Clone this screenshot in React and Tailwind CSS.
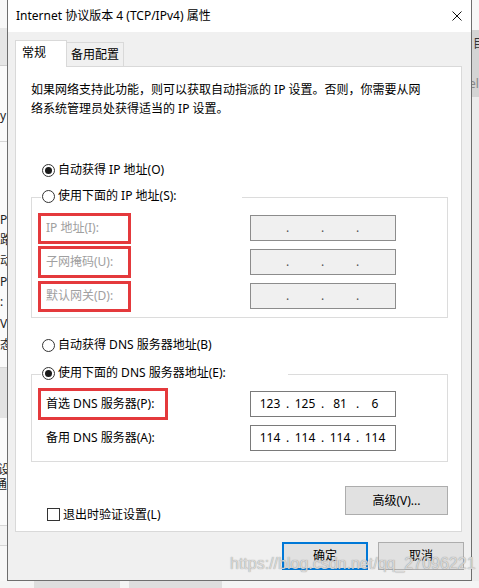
import React from "react";

const RED = "border-[#e4393c]";

function Radio({ checked, label, bgWidth }) {
  return (
    <div className="relative z-10 flex h-[20px] items-center ml-[25px]">
      <div
        className="flex h-[20px] items-center bg-white pl-[1px]"
        style={bgWidth ? { width: bgWidth } : undefined}
      >
        <span className="flex h-[13px] w-[13px] items-center justify-center rounded-full border border-[#333333] bg-white">
          {checked && <span className="h-[7px] w-[7px] rounded-full bg-[#1a1a1a]" />}
        </span>
        <span className="ml-[3px] whitespace-nowrap text-[12px] leading-[20px] text-black">{label}</span>
      </div>
    </div>
  );
}

function IpField({ values, disabled }) {
  const cls = disabled
    ? "border-[#8c8c8c] bg-[#f0f0f0]"
    : "border-[#7a7a7a] bg-white";
  const v = values || ["", "", "", ""];
  return (
    <div
      className={`grid h-[26px] w-[146px] grid-cols-[28px_7px_28px_7px_28px_7px_28px] items-center border pl-[5px] text-[12px] leading-[24px] text-black ${cls}`}
    >
      <span className="text-center">{v[0]}</span>
      <span className={`text-center ${disabled ? "text-[#555]" : ""}`}>.</span>
      <span className="text-center">{v[1]}</span>
      <span className={`text-center ${disabled ? "text-[#555]" : ""}`}>.</span>
      <span className="text-center">{v[2]}</span>
      <span className={`text-center ${disabled ? "text-[#555]" : ""}`}>.</span>
      <span className="text-center">{v[3]}</span>
    </div>
  );
}

function IpRow({ label, boxW, boxH, disabled, values, boxed }) {
  return (
    <div className="flex h-[26px] items-center">
      <div className="flex w-[218px] items-center">
        {boxed ? (
          <div
            className={`ml-[6px] flex items-center border-[3px] ${RED} pl-[5px]`}
            style={{ width: boxW, height: boxH }}
          >
            <span
              className={`whitespace-nowrap text-[12px] leading-[20px] ${
                disabled ? "text-[#a0a0a0]" : "text-black"
              }`}
            >
              {label}
            </span>
          </div>
        ) : (
          <span className="ml-[14px] whitespace-nowrap text-[12px] leading-[20px] text-black">{label}</span>
        )}
      </div>
      <IpField values={values} disabled={disabled} />
    </div>
  );
}

function LeftStrip() {
  const chars = [
    ["y", 108],
    ["P", 212],
    ["路", 232],
    ["动", 253],
    ["P", 274],
    [":", 294],
    ["VC", 316],
    ["态", 337],
  ];
  return (
    <div className="relative h-[581px] w-[7px] overflow-hidden bg-[#f7f7f7]">
      <div className="mt-[28px] h-[38px] border-b border-[#cfcfcf] bg-[#e6e6e6]" />
      <div className="h-[76px] border-b border-[#d6d6d6] bg-[#fafafa]" />
      <div className="h-[226px] border-b border-[#d6d6d6] bg-[#fafafa]" />
      <div className="h-[50px] bg-[#e3e3e3]" />
      <div className="h-[108px] border-b border-[#d6d6d6] bg-[#fafafa]" />
      <div className="h-[20px] border-b border-[#d6d6d6] bg-[#f3f3f3]" />
      {chars.map(([c, y]) => (
        <span
          key={y}
          className="absolute left-0 whitespace-nowrap text-[12px] leading-[16px] text-[#222]"
          style={{ top: y }}
        >
          {c}
        </span>
      ))}
      <span className="absolute left-[-2px] top-[462px] whitespace-nowrap text-[12px] leading-[16px] text-[#222]">设</span>
      <span className="absolute left-[-5px] top-[477px] whitespace-nowrap text-[12px] leading-[16px] text-[#222]">通</span>
    </div>
  );
}

function RightStrip() {
  return (
    <div className="relative h-[581px] w-[7px] overflow-hidden bg-[#f0f0f0]">
      <div className="h-[30px] bg-[#f7f7f7]" />
      <div className="h-[67px] bg-[#d4d4d4]" />
      <div className="h-[484px] bg-[#ececec]" />
      <span className="absolute left-[1px] top-[36px] text-[12px] leading-[16px] text-[#333]">目</span>
      <span className="absolute left-[-3px] top-[76px] text-[12px] leading-[16px] text-[#888]">el</span>
    </div>
  );
}

function Dialog() {
  return (
    <div className="flex h-[581px] w-[465px] flex-col border-x border-b border-[#6e6e6e] bg-[#f0f0f0]">
      {/* title bar */}
      <div className="flex h-[32px] items-center justify-between bg-white pl-[8px] pr-[9px]">
        <span className="whitespace-nowrap text-[12px] leading-[16px] text-black">
          Internet 协议版本 4 (TCP/IPv4) 属性
        </span>
        <svg width="10" height="10" viewBox="0 0 10 10" className="block">
          <path d="M0.5 0.5 L9.5 9.5 M9.5 0.5 L0.5 9.5" stroke="#111" strokeWidth="1" fill="none" />
        </svg>
      </div>

      {/* tabs */}
      <div className="mt-[8px] flex h-[26px] items-end pl-[7px]">
        <div className="relative z-10 -mb-px flex h-[27px] w-[52px] items-start border-x border-t border-[#d9d9d9] bg-white pl-[6px] pt-[3px]">
          <span className="text-[12px] leading-[18px] text-black">常规</span>
        </div>
        <div className="flex h-[24px] w-[57px] items-start border-r border-t border-[#d9d9d9] bg-[#f0f0f0] pl-[4px] pt-[3px]">
          <span className="whitespace-nowrap text-[12px] leading-[18px] text-black">备用配置</span>
        </div>
      </div>

      {/* panel */}
      <div className="ml-[7px] flex h-[466px] w-[447px] flex-col border border-[#d9d9d9] bg-white">
        <p className="ml-[15px] mt-[13px] whitespace-nowrap text-[12px] leading-[19px] text-black">
          如果网络支持此功能，则可以获取自动指派的 IP 设置。否则，你需要从网
          <br />
          络系统管理员处获得适当的 IP 设置。
        </p>

        <div className="mt-[42px]">
          <Radio checked label="自动获得 IP 地址(O)" />
        </div>
        <div className="mt-[6px]">
          <Radio label="使用下面的 IP 地址(S):" bgWidth={201} />
        </div>
        <div className="-mt-[9px] ml-[15px] flex w-[417px] flex-col gap-[8px] border border-[#dcdcdc] pb-[8px] pt-[17px]">
          <IpRow boxed disabled label="IP 地址(I):" boxW={93} boxH={31} />
          <IpRow boxed disabled label="子网掩码(U):" boxW={93} boxH={32} />
          <IpRow boxed disabled label="默认网关(D):" boxW={93} boxH={31} />
        </div>

        <div className="mt-[17px]">
          <Radio label="自动获得 DNS 服务器地址(B)" />
        </div>
        <div className="mt-[8px]">
          <Radio checked label="使用下面的 DNS 服务器地址(E):" bgWidth={247} />
        </div>
        <div className="-mt-[9px] ml-[15px] flex w-[417px] flex-col gap-[8px] border border-[#dcdcdc] pb-[10px] pt-[16px]">
          <IpRow boxed label="首选 DNS 服务器(P):" boxW={130} boxH={32} values={["123", "125", "81", "6"]} />
          <IpRow label="备用 DNS 服务器(A):" values={["114", "114", "114", "114"]} />
        </div>

        <div className="ml-[15px] flex w-[417px] items-start justify-between">
          <div className="mt-[46px] flex h-[13px] items-center pl-[16px]">
            <span className="h-[13px] w-[13px] border border-[#333333] bg-white" />
            <span className="ml-[3px] whitespace-nowrap text-[12px] leading-[16px] text-black">退出时验证设置(L)</span>
          </div>
          <button className="mt-[24px] flex h-[29px] w-[103px] items-center justify-center border border-[#adadad] bg-[#e1e1e1] text-[12px] leading-[16px] text-black">
            高级(V)...
          </button>
        </div>
      </div>

      {/* bottom buttons */}
      <div className="mt-[10px] flex justify-end gap-[10px] pr-[7px]">
        <button className="flex h-[28px] w-[86px] items-center justify-center border-2 border-[#0078d7] bg-[#e1e1e1] text-[12px] leading-[16px] text-black">
          确定
        </button>
        <button className="flex h-[28px] w-[86px] items-center justify-center border border-[#adadad] bg-[#e1e1e1] text-[12px] leading-[16px] text-black">
          取消
        </button>
      </div>
    </div>
  );
}

export default function App() {
  return (
    <div className="relative flex h-[588px] w-[479px] flex-col overflow-hidden bg-[#f0f0f0] font-['Noto_Sans','Noto_Sans_CJK_SC',sans-serif]">
      <div className="flex h-[581px]">
        <LeftStrip />
        <Dialog />
        <RightStrip />
      </div>
      <div className="flex h-[7px]">
        <div className="w-[34px] bg-[#f4f4f4]" />
        <div className="w-[86px] bg-[#dedede]" />
        <div className="w-[9px] bg-[#f4f4f4]" />
        <div className="w-[93px] bg-[#dedede]" />
        <div className="flex-1 bg-[#f4f4f4]" />
      </div>
      <span className="pointer-events-none absolute left-[230px] top-[552px] whitespace-nowrap font-['Liberation_Sans',sans-serif] text-[16px] leading-[24px] text-[rgba(230,230,230,0.85)] [text-shadow:0_0_1px_rgba(80,80,80,0.7)]">
        https://blog.csdn.net/qq_27096221
      </span>
    </div>
  );
}
